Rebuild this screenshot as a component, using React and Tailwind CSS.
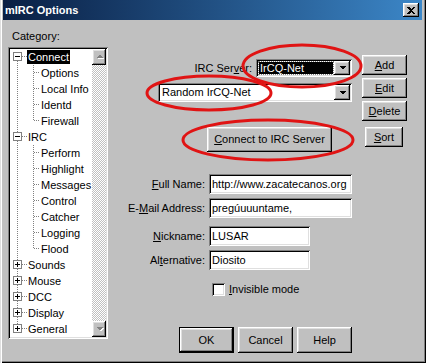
import React from "react";

const raised =
  "bg-[#c0c0c0] shadow-[inset_-1px_-1px_#000,inset_1px_1px_#fff,inset_-2px_-2px_#808080,inset_2px_2px_#dfdfdf]";
const sunken =
  "bg-white shadow-[inset_1px_1px_#808080,inset_-1px_-1px_#fff,inset_2px_2px_#000,inset_-2px_-2px_#dfdfdf]";
const dither =
  "bg-[image:repeating-conic-gradient(#ffffff_0_25%,#c0c0c0_0_50%)] bg-[length:2px_2px]";

const tree = [
  { label: "Connect", root: true, open: true, sel: true, first: true },
  { label: "Options" },
  { label: "Local Info" },
  { label: "Identd" },
  { label: "Firewall", last: true },
  { label: "IRC", root: true, open: true },
  { label: "Perform" },
  { label: "Highlight" },
  { label: "Messages" },
  { label: "Control" },
  { label: "Catcher" },
  { label: "Logging" },
  { label: "Flood", last: true },
  { label: "Sounds", root: true },
  { label: "Mouse", root: true },
  { label: "DCC", root: true },
  { label: "Display", root: true },
  { label: "General", root: true, end: true },
];

const dots = { stroke: "#808080", strokeDasharray: "1 1", fill: "none" };

const TreeLines = ({ item }) => {
  if (item.root) {
    return (
      <svg width="17" height="16" shapeRendering="crispEdges" className="shrink-0">
        {!item.first && <path d="M7.5 0v3" {...dots} />}
        {!item.end && <path d="M7.5 12v4" {...dots} />}
        <path d="M12 7.5h5" {...dots} />
        <rect x="3.5" y="3.5" width="8" height="8" fill="#fff" stroke="#808080" />
        <path d="M5 7.5h5" stroke="#000" />
        {!item.open && <path d="M7.5 5v5" stroke="#000" />}
      </svg>
    );
  }
  return (
    <svg width="30" height="16" shapeRendering="crispEdges" className="shrink-0">
      <path d="M7.5 0v16" {...dots} />
      <path d={item.last ? "M23.5 0v8" : "M23.5 0v16"} {...dots} />
      <path d="M24 7.5h5" {...dots} />
    </svg>
  );
};

const Arrow = ({ up, disabled }) => (
  <svg width="9" height="6" shapeRendering="crispEdges">
    {disabled && (
      <path
        d={up ? "M2 5h7L5.5 1.5z" : "M2 2h7L5.5 5.5z"}
        fill="#fff"
      />
    )}
    <path
      d={up ? "M1 4h7L4.5 0.5z" : "M1 1h7L4.5 4.5z"}
      fill={disabled ? "#808080" : "#000"}
    />
  </svg>
);

const Btn = ({ children, className = "", def }) =>
  def ? (
    <div className={`border border-black flex ${className}`}>
      <div className={`${raised} flex-1 flex items-center justify-center`}>
        {children}
      </div>
    </div>
  ) : (
    <div className={`${raised} flex items-center justify-center ${className}`}>
      {children}
    </div>
  );

const U = ({ children }) => <span className="underline underline-offset-[1px]">{children}</span>;

const Field = ({ label, value, width }) => (
  <div className="flex items-center h-[20px]">
    <div className="w-[47px] flex justify-end whitespace-nowrap">{label}</div>
    <div className={`${sunken} ml-[4px] h-[20px] pl-[3px] flex items-center whitespace-nowrap overflow-hidden ${width}`}>
      {value}
    </div>
  </div>
);

export default function App() {
  return (
    <div className="relative w-[426px] h-[363px] bg-[#c0c0c0] pl-[3px] pr-[4px] pb-[2px] flex flex-col text-[11px] text-black font-['Liberation_Sans',Arial,sans-serif] shadow-[inset_1px_0_#dfdfdf,inset_2px_0_#fff,inset_-1px_-1px_#000,inset_-2px_-2px_#808080]">
      {/* title bar */}
      <div className="h-[20px] shrink-0 flex items-center justify-between pl-[2px] pr-[3px] bg-gradient-to-r from-[#0a1f44] to-[#3c87c8]">
        <span className="text-white font-bold text-[11px]">mIRC Options</span>
        <div className={`${raised} w-[16px] h-[14px] flex items-center justify-center`}>
          <svg width="8" height="7" shapeRendering="crispEdges">
            <path d="M0 0h2l2 2 2-2h2L5 3.5 8 7H6L4 5 2 7H0l3-3.5z" fill="#000" />
          </svg>
        </div>
      </div>

      <div className="flex flex-1">
        {/* category tree */}
        <div className="ml-[5px] w-[100px] flex flex-col">
          <div className="mt-[10px] ml-[4px] h-[13px] leading-[13px]">Category:</div>
          <div className={`${sunken} mt-[4px] h-[292px] p-[2px] flex`}>
            <div className="flex-1 flex flex-col">
              {tree.map((item) => (
                <div key={item.label} className="h-[16px] flex items-center">
                  <TreeLines item={item} />
                  <span
                    className={`leading-[14px] px-[1px] whitespace-nowrap ${
                      item.sel ? "bg-black text-white" : ""
                    }`}
                  >
                    {item.label}
                  </span>
                </div>
              ))}
            </div>
            <div className="w-[16px] flex flex-col">
              <div className={`${raised} h-[16px] flex items-center justify-center`}>
                <Arrow up disabled />
              </div>
              <div className={`flex-1 ${dither}`} />
              <div className={`${raised} h-[16px] flex items-center justify-center`}>
                <Arrow disabled />
              </div>
            </div>
          </div>
        </div>

        {/* main settings */}
        <div className="ml-[50px] w-[194px] flex flex-col">
          <div className="mt-[39px] h-[18px] flex items-center justify-end">
            <span className="whitespace-nowrap">
              IRC Ser<U>v</U>er:
            </span>
            <div className={`${sunken} ml-[4px] w-[96px] h-[18px] p-[2px] flex`}>
              <div className="flex-1 p-[1px] flex">
                <div className="flex-1 bg-black text-white pl-[1px] leading-[12px] outline outline-1 outline-dotted outline-[#808080]">
                  IrCQ-Net
                </div>
              </div>
              <div className={`${raised} w-[16px] flex items-center justify-center`}>
                <Arrow />
              </div>
            </div>
          </div>

          <div className={`${sunken} mt-[6px] h-[19px] p-[2px] flex`}>
            <div className="flex-1 pl-[2px] flex items-center">Random IrCQ-Net</div>
            <div className={`${raised} w-[16px] flex items-center justify-center`}>
              <Arrow />
            </div>
          </div>

          <Btn className="mt-[25px] ml-[49px] w-[125px] h-[25px]">
            <span>
              <U>C</U>onnect to IRC Server
            </span>
          </Btn>

          <div className="mt-[22px]">
            <Field label={<span><U>F</U>ull Name:</span>} value="http://www.zacatecanos.org" width="w-[143px]" />
          </div>
          <div className="mt-[4px]">
            <Field label={<span>E-<U>M</U>ail Address:</span>} value="pregúuuuntame," width="w-[143px]" />
          </div>
          <div className="mt-[8px]">
            <Field label={<span><U>N</U>ickname:</span>} value="LUSAR" width="w-[101px]" />
          </div>
          <div className="mt-[4px]">
            <Field label={<span>Al<U>t</U>ernative:</span>} value="Diosito" width="w-[101px]" />
          </div>

          <div className="mt-[13px] ml-[54px] h-[13px] flex items-center">
            <div className={`${sunken} w-[13px] h-[13px]`} />
            <span className="ml-[4px]">
              <U>I</U>nvisible mode
            </span>
          </div>

          <div className="mt-[31px] ml-[21px] flex gap-[4px]">
            <Btn def className="w-[55px] h-[26px]">OK</Btn>
            <Btn className="w-[55px] h-[26px]">Cancel</Btn>
            <Btn className="w-[55px] h-[26px]">Help</Btn>
          </div>
        </div>

        {/* server buttons */}
        <div className="ml-[10px] w-[45px] flex flex-col">
          <Btn className="mt-[35px] h-[20px]"><span><U>A</U>dd</span></Btn>
          <Btn className="mt-[3px] h-[20px]"><span><U>E</U>dit</span></Btn>
          <Btn className="mt-[3px] h-[20px]"><span><U>D</U>elete</span></Btn>
          <Btn className="mt-[6px] ml-[3px] w-[38px] h-[20px]"><span><U>S</U>ort</span></Btn>
        </div>
      </div>

      {/* red annotation marks */}
      <svg className="absolute inset-0 pointer-events-none" width="426" height="363">
        <g fill="none" stroke="#e01414" strokeWidth="3">
          <ellipse cx="302" cy="66" rx="59" ry="21" />
          <ellipse cx="209" cy="93" rx="62" ry="17" />
          <ellipse cx="268" cy="140" rx="85" ry="20" />
        </g>
      </svg>
    </div>
  );
}
